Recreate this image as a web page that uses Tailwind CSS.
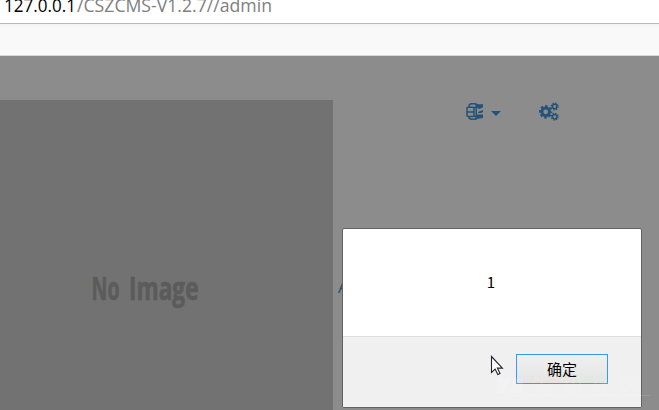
<!DOCTYPE html>
<html lang="zh-CN">
<head>
<meta charset="utf-8">
<title>admin</title>
<script src="https://cdn.jsdelivr.net/npm/@tailwindcss/browser@4"></script>
</head>
<body class="w-[659px] h-[410px] overflow-hidden bg-[#8c8c8c] font-['Open_Sans','Noto_Sans_CJK_SC',sans-serif]">
<div class="relative flex flex-col w-[659px] h-[410px] overflow-hidden">
  <header class="h-6 shrink-0 bg-white border-b border-[#bababa] overflow-hidden">
    <svg class="block" width="659" height="23"><text x="4" y="12" font-size="18" textLength="72" lengthAdjust="spacingAndGlyphs" fill="#000">127.0.0.1</text><text x="77" y="12" font-size="18" textLength="195" lengthAdjust="spacingAndGlyphs" fill="#808080">/CSZCMS-V1.2.7//admin</text></svg>
  </header>
  <div class="h-8 shrink-0 bg-linear-to-b from-[#f3f3f3] via-[#f9f9f9] via-15% to-[#f9f9f9] border-b border-[#d8d8d8]"></div>
  <main class="flex flex-1 bg-[#8c8c8c]">
    <section class="mt-11 w-[333px] bg-[#727272]">
      <svg class="block" width="333" height="310"><g fill="#5b5b5b" stroke="#5b5b5b" stroke-width=".7" font-family="'Open Sans'" font-weight="700" font-size="33"><text transform="translate(91.500 200) scale(.5 1)" textLength="56" lengthAdjust="spacingAndGlyphs">No</text><text transform="translate(129 200) scale(.5 1)" textLength="139" lengthAdjust="spacingAndGlyphs">Image</text></g></svg>
    </section>
    <nav class="flex items-start pt-[46px] pl-[133px] text-[#24527a]">
      <svg width="18" height="19" viewBox="0 0 18 19" fill="none" stroke="currentColor" stroke-width="1.5">
        <path d="M3.2 5V3L5 1.8h4L10.500 3v2.500M3.200 14.500v1.700L5 17.200h4l1.500-1.200v-1.500"/>
        <rect x="1" y="5.200" width="7" height="9.300" rx="1"/>
        <path d="M1 9.900h7M8 5.500h2.200v9H8"/>
        <path fill="currentColor" stroke="none" d="M9 1.200h1l2 1h5v3.300l-4 1.500-3-2zM12 10l5-2v2l-2 1h-3zM11 12.500h6V16l-5 .8-2 1H9l1.500-3z"/>
      </svg>
      <svg class="ml-[7px] mt-[9px]" width="10" height="5" viewBox="0 0 10 5" fill="currentColor"><path d="M0 0h10L5 5z"/></svg>
      <svg class="ml-[38px]" width="20" height="19" viewBox="0 0 20 19" fill="none" stroke="currentColor">
        <circle cx="6.700" cy="9.800" r="3.800" stroke-width="2.800"/>
        <circle cx="6.700" cy="9.800" r="5.700" stroke-width="2" stroke-dasharray="2.600 1.877" stroke-dashoffset="1.300"/>
        <circle cx="15.700" cy="4.500" r="2.200" stroke-width="1.500"/>
        <circle cx="15.700" cy="4.500" r="3.400" stroke-width="1.200" stroke-dasharray="1.500 1.170"/>
        <circle cx="15.700" cy="14.700" r="2.200" stroke-width="1.500"/>
        <circle cx="15.700" cy="14.700" r="3.400" stroke-width="1.200" stroke-dasharray="1.500 1.170"/>
      </svg>
    </nav>
  </main>
  <span class="absolute left-[338px] top-[275px] text-[17px] leading-6 text-[#254b6f]">A</span>
  <div role="dialog" class="absolute left-[342px] top-[228px] w-[300px] h-[180px] flex flex-col bg-white border border-[#626262] rounded-[2px] overflow-hidden">
    <div class="h-[108px] shrink-0 border-b border-[#dfdfdf] flex justify-center items-center text-[15px] text-black pr-0.5 font-['Noto_Sans_CJK_SC',sans-serif]">1</div>
    <div class="flex-1 bg-[#f0f0f0] flex justify-end pt-[17px] pr-[33px]">
      <button class="w-[92px] h-[30px] border border-[#3399ff] bg-linear-to-b from-[#f0f0f0] to-[#e4e4e4] text-[15px] leading-[28px] text-black font-['Noto_Sans_CJK_SC',sans-serif]">确定</button>
    </div>
  </div>
  <svg class="absolute left-[490px] top-[355px]" width="14" height="22" viewBox="0 0 14 22" fill="#fff" stroke="#22222c" stroke-width="1.100"><path d="M1.500 1.500v16l3.600-3.400 2.700 5.500 2.200-1-2.600-5.500h5z"/></svg>
  <svg class="absolute left-[494px] top-[374px]" width="160" height="26" fill="#fff" fill-opacity=".13">
    <path d="M3 4h15l-8 15H3zM20 4h9v15H15z"/>
    <text x="36" y="20" font-size="23" textLength="112" font-family="'Noto Sans CJK SC'">先知社区</text>
    <path d="M13 21h143v1H13z"/>
  </svg>
</div>
</body>
</html>
